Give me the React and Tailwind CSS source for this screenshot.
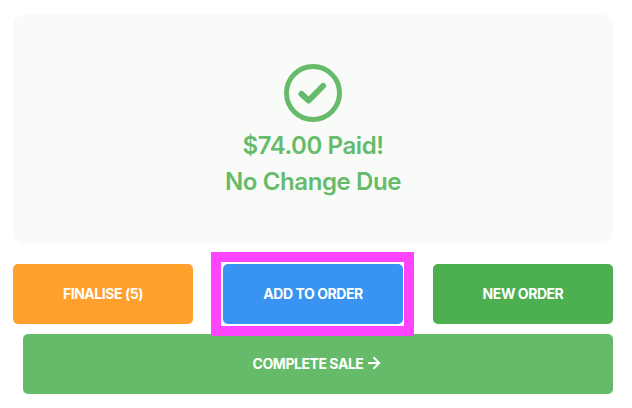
import React from "react";
import { ArrowRight } from "lucide-react";

function ActionButton({ className = "", children }) {
  return (
    <button className={`h-[60px] pb-0.5 rounded-[5px] flex items-center justify-center text-white text-[14px] font-bold tracking-[-0.45px] ${className}`}>
      {children}
    </button>
  );
}

export default function App() {
  return (
    <div className="w-[632px] h-[408px] bg-white pt-[14px] pl-[13px] pr-[19px] font-['Inter',sans-serif] overflow-hidden">
      <div className="h-[230px] rounded-[12px] bg-[#f9fbf9] flex flex-col items-center pt-[49px] text-[#66bb6a]">
        <svg width="60" height="60" viewBox="0 0 60 60" fill="none" stroke="#66bb6a">
          <circle cx="30" cy="30" r="26.5" strokeWidth="5" />
          <path d="M18.5 31 L25.7 37.5 L40 23" strokeWidth="6" strokeLinecap="round" strokeLinejoin="round" />
        </svg>
        <p className="mt-[5px] text-[24px] leading-[36px] font-semibold tracking-[-0.4px]">$74.00 Paid!</p>
        <p className="text-[24px] leading-[36px] font-semibold tracking-[-0.4px]">No Change Due</p>
      </div>

      <div className="mt-5 flex justify-between">
        <ActionButton className="w-[180px] bg-[#ffa02d]">FINALISE (5)</ActionButton>
        <div className="relative">
          <ActionButton className="w-[180px] bg-[#3993f2]">ADD TO ORDER</ActionButton>
          <span className="absolute z-10 -left-3 -right-[11px] -top-3 -bottom-3 border-[10px] border-[#ff44ff] pointer-events-none" />
        </div>
        <ActionButton className="w-[180px] bg-[#4caf50]">NEW ORDER</ActionButton>
      </div>

      <ActionButton className="mt-[10px] ml-[10px] w-[590px] bg-[#66bb6a] gap-[2px]">
        COMPLETE SALE
        <ArrowRight size={18} strokeWidth={2.4} />
      </ActionButton>
    </div>
  );
}
